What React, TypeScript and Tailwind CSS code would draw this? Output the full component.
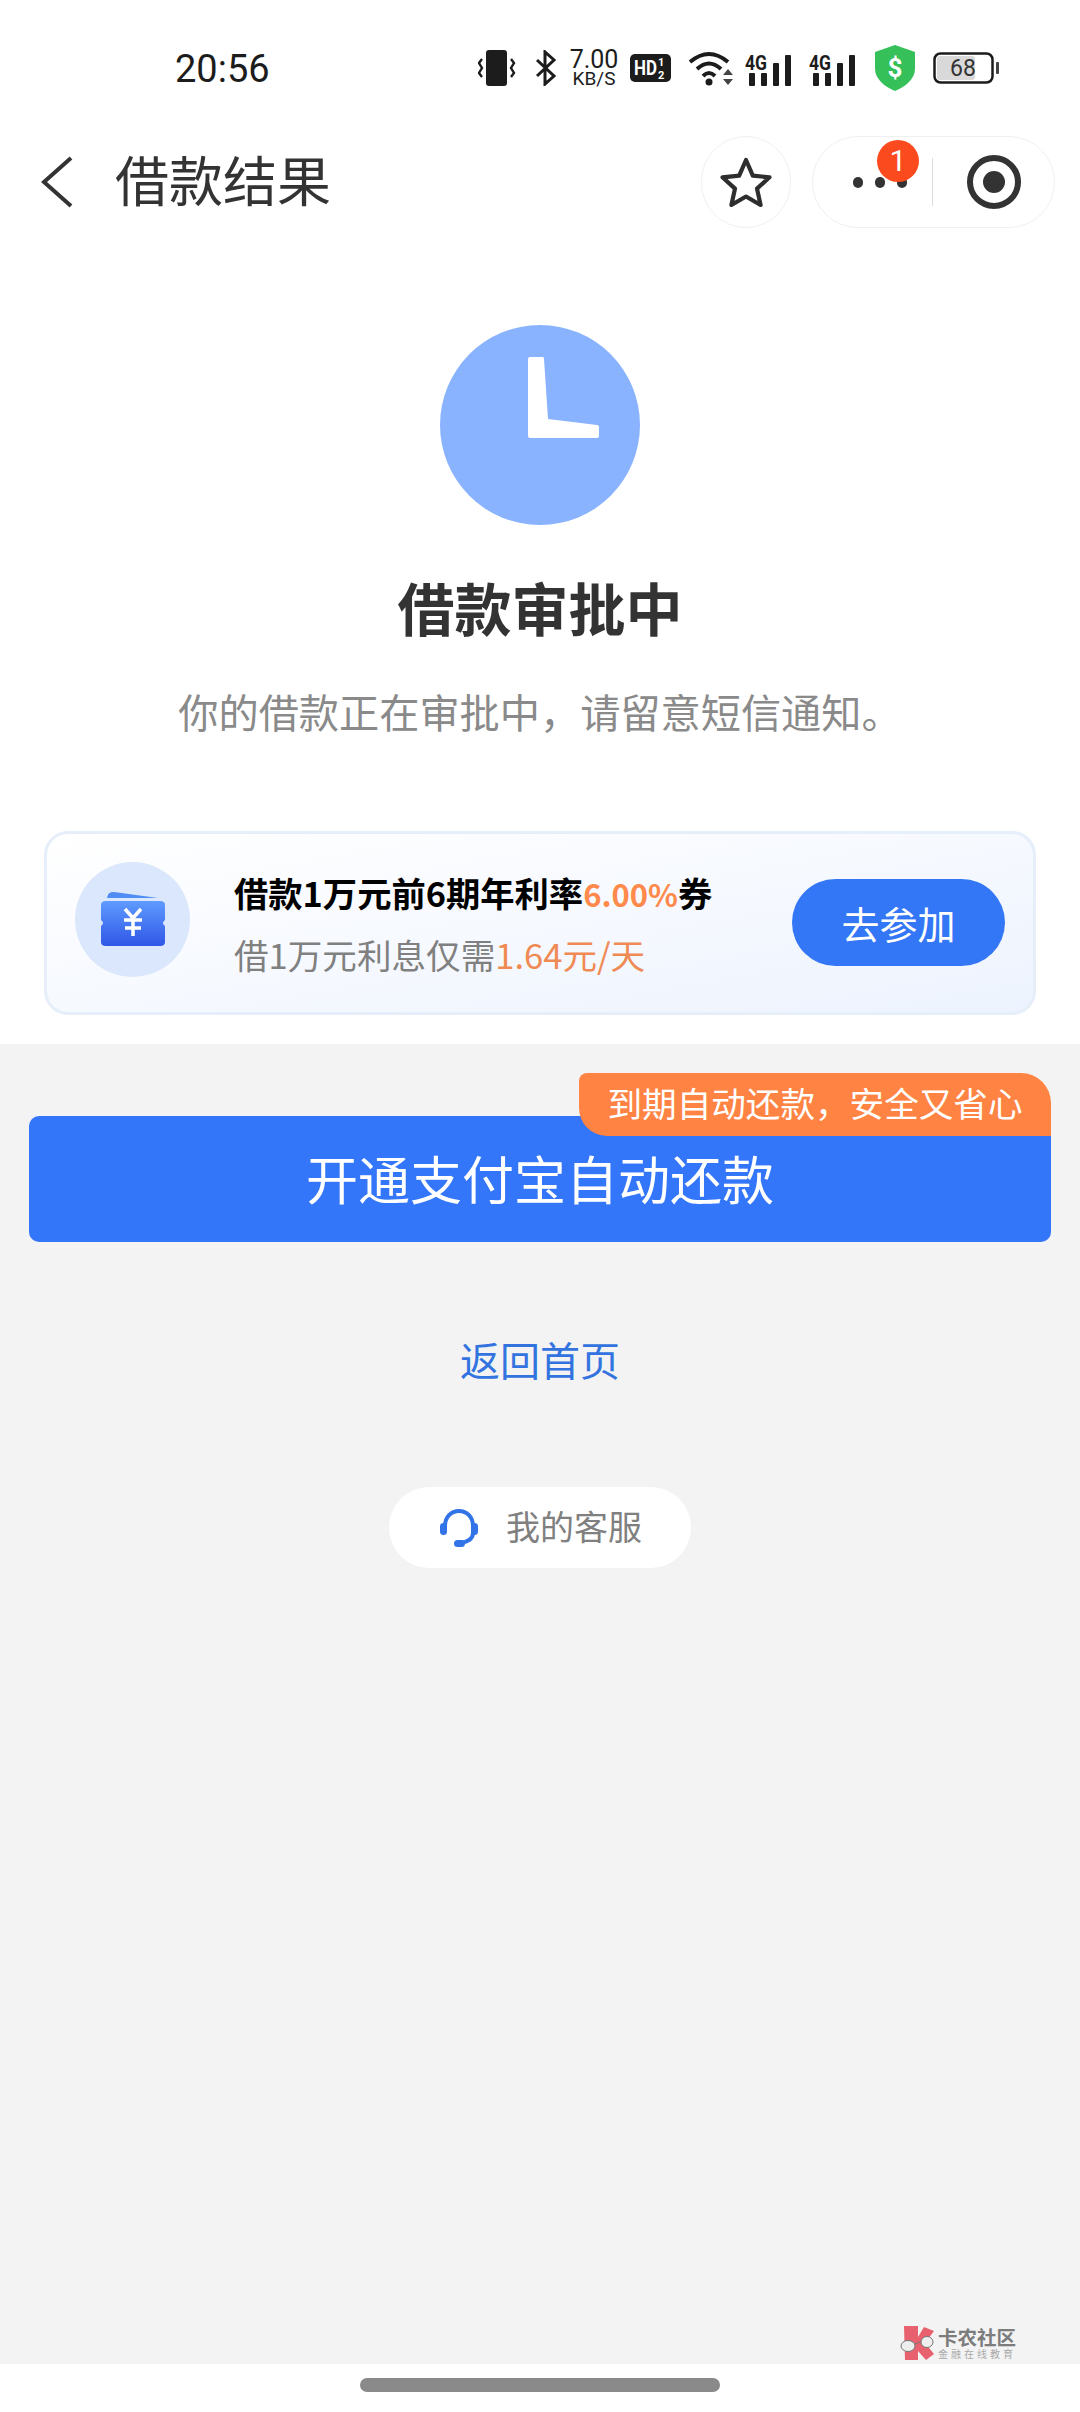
const cjk = "font-['Noto_Sans_CJK_SC','Noto_Sans',sans-serif]";

function VibrateIcon() {
  return (
    <svg width="38" height="36" viewBox="0 0 38 36" className="mr-[19px]">
      <rect x="8" y="0" width="21" height="36" rx="3" fill="#1c1c1c" />
      <path d="M4 9 L1 13 L4 18 L1 23 L4 27 M33 9 L36 13 L33 18 L36 23 L33 27" fill="none" stroke="#1c1c1c" strokeWidth="2.4" />
    </svg>
  );
}

function BluetoothIcon() {
  return (
    <svg width="22" height="36" viewBox="0 0 22 36" className="mr-[12px]">
      <path d="M2 10 L19 26 L10 34 L10 2 L19 10 L2 26" fill="none" stroke="#1c1c1c" strokeWidth="3" />
    </svg>
  );
}

function HdIcon() {
  return (
    <svg width="41" height="28" viewBox="0 0 41 28" className="mr-[17px]">
      <rect width="41" height="28" rx="5" fill="#1c1c1c" />
      <text x="4" y="21" fontSize="20" fontWeight="700" fill="#fff" fontFamily="Roboto" textLength="23" lengthAdjust="spacingAndGlyphs">HD</text>
      <text x="28" y="12" fontSize="11" fontWeight="700" fill="#fff" fontFamily="Roboto">1</text>
      <text x="28" y="25" fontSize="11" fontWeight="700" fill="#fff" fontFamily="Roboto">2</text>
    </svg>
  );
}

function WifiIcon() {
  return (
    <svg width="46" height="36" viewBox="0 0 46 36" className="mr-[11px]">
      <path d="M2 12 Q21 -4 40 12 M9 19 Q21 8 33 19 M15 26 Q21 20 27 26" fill="none" stroke="#1c1c1c" strokeWidth="4" />
      <circle cx="21" cy="32" r="3.5" fill="#1c1c1c" />
      <path d="M35 25 H45 L40 19 Z M35 29 H45 L40 35 Z" fill="#444" />
    </svg>
  );
}

function SignalIcon({ className }: { className: string }) {
  return (
    <svg width="47" height="38" viewBox="0 0 47 38" className={className}>
      <text x="0" y="21" fontSize="20" fontWeight="700" fill="#1c1c1c" fontFamily="Roboto" textLength="22" lengthAdjust="spacingAndGlyphs">4G</text>
      <rect x="4" y="24" width="6" height="13" rx="1" fill="#1c1c1c" />
      <rect x="16" y="24" width="6" height="13" rx="1" fill="#1c1c1c" />
      <rect x="28" y="14" width="6" height="23" rx="1" fill="#1c1c1c" />
      <rect x="40" y="6" width="6" height="31" rx="1" fill="#1c1c1c" />
    </svg>
  );
}

function ShieldIcon() {
  return (
    <svg width="40" height="46" viewBox="0 0 40 46" className="mr-[18px]">
      <path d="M20 0 L40 7 V24 C40 34 30 42 20 46 C10 42 0 34 0 24 V7 Z" fill="#35c05a" />
      <text x="20" y="32" fontSize="26" fontWeight="700" fill="#fff" fontFamily="Roboto" textAnchor="middle">$</text>
    </svg>
  );
}

function BatteryIcon() {
  return (
    <svg width="66" height="32" viewBox="0 0 66 32">
      <rect x="1.5" y="1.5" width="58" height="29" rx="6" fill="#fff" stroke="#1c1c1c" strokeWidth="2.5" />
      <rect x="4" y="4" width="38" height="24" rx="3" fill="#d9d9d9" />
      <rect x="63" y="10" width="3" height="12" rx="1" fill="#444" />
      <text x="30" y="24" fontSize="23" fill="#333" fontFamily="Roboto" textAnchor="middle">68</text>
    </svg>
  );
}

function StatusBar() {
  return (
    <div className="flex h-[136px] items-center pl-[175px] pr-[81px]">
      <span className="pt-[2px] font-['Roboto',sans-serif] text-[38px] leading-none text-[#1c1c1c]">20:56</span>
      <div className="ml-auto flex items-center">
        <VibrateIcon />
        <BluetoothIcon />
        <div className="mr-[11px] flex w-[50px] flex-col items-center font-['Roboto',sans-serif] text-[#1c1c1c]">
          <span className="text-[25px] leading-[21px]">7.00</span>
          <span className="text-[19px] leading-[17px]">KB/S</span>
        </div>
        <HdIcon />
        <WifiIcon />
        <SignalIcon className="mr-[17px]" />
        <SignalIcon className="mr-[19px]" />
        <ShieldIcon />
        <BatteryIcon />
      </div>
    </div>
  );
}

function NavBar() {
  return (
    <div className="flex h-[92px] items-center pl-[41px] pr-[25px]">
      <svg width="32" height="52" viewBox="0 0 32 52" className="mr-[42px]">
        <path d="M30 2 L3 26 L30 50" fill="none" stroke="#333" strokeWidth="4" />
      </svg>
      <h1 className="mb-[6px] text-[54px] font-normal leading-none text-[#333]">借款结果</h1>
      <div className="ml-auto flex h-[92px] w-[90px] items-center justify-center rounded-full border border-[#f0f0f0]">
        <svg width="52" height="50" viewBox="0 0 52 50">
          <path d="M26 3 L32.8 18.6 L49.5 20.3 L37 31.6 L40.6 48 L26 39.5 L11.4 48 L15 31.6 L2.5 20.3 L19.2 18.6 Z" fill="none" stroke="#2e2e2e" strokeWidth="4.2" strokeLinejoin="round" />
        </svg>
      </div>
      <div className="relative ml-[21px] flex h-[92px] w-[243px] items-center rounded-full border border-[#f0f0f0]">
        <div className="ml-[40px] flex gap-[12px]">
          <span className="h-[11px] w-[10px] rounded-full bg-[#333]" />
          <span className="h-[11px] w-[10px] rounded-full bg-[#333]" />
          <span className="h-[11px] w-[10px] rounded-full bg-[#333]" />
        </div>
        <span className="ml-[25px] h-[48px] w-px bg-[#dcdcdc]" />
        <div className="ml-[34px] flex h-[54px] w-[54px] items-center justify-center rounded-full border-[6px] border-[#333]">
          <span className="h-[22px] w-[22px] rounded-full bg-[#333]" />
        </div>
        <span className="absolute left-[64px] top-[3px] flex h-[42px] w-[42px] items-center justify-center rounded-full bg-[#fb4a1e] font-['Roboto',sans-serif] text-[30px] leading-none text-white">1</span>
      </div>
    </div>
  );
}

function TicketIcon() {
  return (
    <svg width="64" height="56" viewBox="0 0 64 56">
      <defs>
        <linearGradient id="ticket" x1="0" y1="0" x2="0" y2="1">
          <stop offset="0" stopColor="#5f9bff" />
          <stop offset="1" stopColor="#2f56e6" />
        </linearGradient>
      </defs>
      <path d="M6 7 Q7 0 13 1 L57 7 Z" fill="#4f8df5" />
      <path d="M5 10 H59 Q64 10 64 14 V29 Q60 32 64 35 V51 Q64 55 59 55 H5 Q0 55 0 51 V35 Q4 32 0 29 V14 Q0 10 5 10 Z" fill="url(#ticket)" />
      <path d="M24 18 L32 27 L40 18 M23 29 H41 M24 37 H40 M32 27 V45" fill="none" stroke="#fff" strokeWidth="3.5" />
    </svg>
  );
}

function HeadsetIcon() {
  return (
    <svg width="38" height="38" viewBox="0 0 38 38">
      <path d="M5 20 V17 C5 8 11 2 19 2 C27 2 33 8 33 17 V24 C33 30 27 33 20 34" fill="none" stroke="#3273e8" strokeWidth="4" />
      <rect x="0" y="14" width="7" height="12" rx="3.5" fill="#3273e8" />
      <rect x="31" y="14" width="7" height="12" rx="3.5" fill="#3273e8" />
      <rect x="14" y="31" width="11" height="7" rx="3.5" fill="#3273e8" />
    </svg>
  );
}

function Watermark() {
  return (
    <div className="absolute bottom-[4px] left-[900px] flex items-center gap-[4px]">
      <svg width="34" height="34" viewBox="0 0 34 34">
        <path d="M4 0 H18 V11 L24 1 L34 5 L25 17 L34 28 L26 34 L18 25 V34 H5 Z" fill="#e8616e" />
        <path d="M15 18 Q19 16 22 16" fill="none" stroke="#777" strokeWidth="1" />
        <ellipse cx="8" cy="20" rx="7" ry="5.5" fill="#eee" stroke="#777" strokeWidth="1" />
        <ellipse cx="27" cy="16" rx="6" ry="5.5" fill="#eee" stroke="#777" strokeWidth="1" />
      </svg>
      <div className="flex flex-col items-start">
        <span className="text-[19.5px] font-bold leading-[22px] text-[#7c7c7c]">卡农社区</span>
        <span className="text-[10px] leading-[12px] tracking-[3px] text-[#a9a9a9]">金融在线教育</span>
      </div>
    </div>
  );
}

export default function App() {
  return (
    <div className={`flex h-[2412px] w-[1080px] flex-col overflow-hidden bg-white ${cjk}`}>
      <StatusBar />
      <NavBar />

      {/* result */}
      <div className="flex flex-col items-center pt-[97px]">
        <div className="flex h-[200px] w-[200px] items-center justify-center rounded-full bg-[#8ab3ff]">
          <svg width="71" height="81" viewBox="0 0 71 81" className="ml-[47px] mt-[-55px]">
            <path d="M2 0 H15 Q16 0 16 2 L20 62 L69 68 Q71 68 71 70 V79 Q71 81 69 81 H2 Q0 81 0 79 V2 Q0 0 2 0 Z" fill="#fff" />
          </svg>
        </div>
        <h2 className="mt-[41px] text-[57px] font-bold leading-[80px] text-[#333]">借款审批中</h2>
        <p className="mt-[35px] text-[40.2px] leading-[60px] text-[#8a8a8a]">你的借款正在审批中，请留意短信通知。</p>
      </div>

      {/* coupon card */}
      <div className="mx-[44px] mb-[29px] mt-[90px] flex h-[184px] items-center rounded-[24px] border-[3px] border-[#e6eefa] bg-gradient-to-br from-white to-[#edf3fe] px-[28px]">
        <div className="mb-[8px] flex h-[115px] w-[115px] shrink-0 items-center justify-center rounded-full bg-[#dbe7fc]">
          <TicketIcon />
        </div>
        <div className="ml-[44px] flex flex-col gap-[16px]">
          <p className="text-[34.3px] font-bold leading-[44px] text-black">
            借款1万元前6期年利率<span className="text-[31px] text-[#ff8a4c]">6.00%</span>券
          </p>
          <p className="text-[34.6px] leading-[44px] text-[#808080]">
            借1万元利息仅需<span className="text-[#ef8a54]">1.64元/天</span>
          </p>
        </div>
        <button className="mb-[2px] ml-auto h-[87px] w-[213px] rounded-full bg-[#3376f6] text-[38px] text-white">去参加</button>
      </div>

      {/* actions */}
      <div className="relative flex flex-1 flex-col items-center bg-[#f3f3f3] pt-[72px]">
        <div className="relative w-[1022px]">
          <button className="flex h-[126px] w-full items-center justify-center rounded-[10px] bg-[#3376f9] pb-[2px] text-[52px] text-white">开通支付宝自动还款</button>
          <div className="absolute right-0 top-[-43px] flex h-[63px] w-[472px] items-center justify-center rounded-bl-[28px] rounded-tl-[8px] rounded-tr-[30px] bg-[#ff8444] pb-[4px] text-[34.6px] text-white">到期自动还款，安全又省心</div>
        </div>
        <a className="mt-[87px] text-[40px] leading-[60px] text-[#3273e0]">返回首页</a>
        <div className="mt-[98px] flex h-[81px] w-[302px] items-center rounded-full bg-white pl-[51px]">
          <HeadsetIcon />
          <span className="mb-[3px] ml-[28px] text-[34px] leading-none text-[#808080]">我的客服</span>
        </div>
        <Watermark />
      </div>

      {/* home indicator */}
      <div className="flex h-[48px] items-start justify-center pt-[14px]">
        <div className="h-[14px] w-[360px] rounded-full bg-[#8a8a8a]" />
      </div>
    </div>
  );
}
